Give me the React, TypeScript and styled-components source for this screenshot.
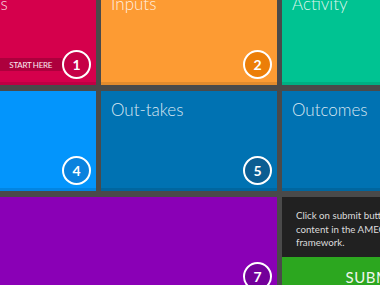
import React from 'react'
import styled, { createGlobalStyle } from 'styled-components'

const GlobalStyle = createGlobalStyle`
  html, body {
    margin: 0;
    padding: 0;
    background: #4a4a4a;
    overflow: hidden;
  }
  body {
    font-family: Lato, "Open Sans", sans-serif;
  }
`

const ViewportStyled = styled.div`
  width: 380px;
  height: 285px;
  overflow: hidden;
  background: #4a4a4a;
`

const GridStyled = styled.div`
  display: grid;
  grid-template-columns: 176px 176px 176px;
  grid-auto-rows: 100px;
  column-gap: 5px;
  row-gap: 6px;
  margin: -15px 0 0 -80px;
`

const TileStyled = styled.div<{ $bg: string; $span?: number }>`
  box-sizing: border-box;
  display: flex;
  flex-direction: column;
  background: ${props => props.$bg};
  border-bottom: 3px solid rgba(0, 0, 0, 0.1);
  grid-column: span ${props => props.$span || 1};
  overflow: hidden;
`

const TitleStyled = styled.div`
  padding: 8px 10px 0;
  font-size: 17px;
  font-weight: 300;
  line-height: 22px;
  color: rgba(255, 255, 255, 0.86);
  white-space: nowrap;
`

const FooterStyled = styled.div`
  display: flex;
  align-items: center;
  justify-content: flex-end;
  margin-top: auto;
  padding: 0 5px 3px 0;
`

const RibbonStyled = styled.div`
  flex: 1;
  height: 13px;
  display: flex;
  align-items: center;
  justify-content: flex-end;
  padding-right: 10px;
  background: #ad003d;
  color: #fbe9ef;
  font-size: 8px;
  letter-spacing: -0.3px;
  text-transform: uppercase;
`

const BadgeStyled = styled.div<{ $fill: string }>`
  box-sizing: border-box;
  width: 29px;
  height: 29px;
  border: 2px solid #fff;
  border-radius: 50%;
  background: ${props => props.$fill};
  display: flex;
  align-items: center;
  justify-content: center;
  color: #fff;
  font-size: 14px;
  font-weight: 700;
`

const PanelStyled = styled.div`
  display: flex;
  flex-direction: column;
  background: #212121;
  overflow: hidden;
`

const PanelTextStyled = styled.div`
  height: 60px;
  box-sizing: border-box;
  padding: 12px 0 0 14px;
  font-size: 9.7px;
  line-height: 13.5px;
  color: #dcdcdc;
  white-space: nowrap;
`

const SubmitStyled = styled.button`
  flex: 1;
  width: 176px;
  border: none;
  margin: 0;
  padding: 0 0 0 10px;
  background: #2ca71f;
  color: #eef6ec;
  font-family: Lato, sans-serif;
  font-size: 15px;
  letter-spacing: 0.5px;
  text-transform: uppercase;
`

type Tile = { title: string; bg: string; fill: string; num?: number; span?: number; start?: boolean }

const tiles: Tile[] = [
  { title: 'Objectives', bg: '#d5004c', fill: '#c60046', num: 1, start: true },
  { title: 'Inputs', bg: '#fd9b33', fill: '#ec7e08', num: 2 },
  { title: 'Activity', bg: '#00c392', fill: '#00a67c' },
  { title: 'Outputs', bg: '#0395fc', fill: '#0a82de', num: 4 },
  { title: 'Out-takes', bg: '#0072b2', fill: '#0b5d92', num: 5 },
  { title: 'Outcomes', bg: '#0072b2', fill: '#0b5d92' },
  { title: 'Impact', bg: '#8a00b6', fill: '#73009a', num: 7, span: 2 },
]

function App() {
  return (
    <ViewportStyled>
      <GlobalStyle />
      <GridStyled>
        {tiles.map(tile => (
          <TileStyled key={tile.title} $bg={tile.bg} $span={tile.span}>
            <TitleStyled>{tile.title}</TitleStyled>
            {tile.num && (
              <FooterStyled>
                {tile.start && <RibbonStyled>Start here</RibbonStyled>}
                <BadgeStyled $fill={tile.fill}>{tile.num}</BadgeStyled>
              </FooterStyled>
            )}
          </TileStyled>
        ))}
        <PanelStyled>
          <PanelTextStyled>
            Click on submit button to save your
            <br />
            content in the AMEC integrated
            <br />
            framework.
          </PanelTextStyled>
          <SubmitStyled>Submit</SubmitStyled>
        </PanelStyled>
      </GridStyled>
    </ViewportStyled>
  )
}

export default App
